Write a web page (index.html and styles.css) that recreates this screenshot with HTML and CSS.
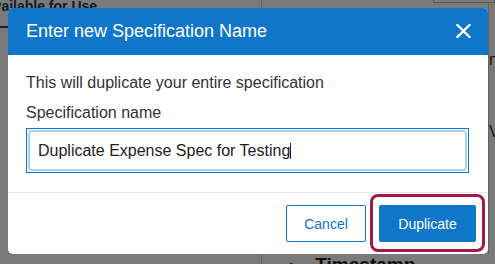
FILE: index.html
```html
<!DOCTYPE html>
<html lang="en">
<head>
  <meta charset="UTF-8" />
  <meta name="viewport" content="width=device-width, initial-scale=1.0"/>
  <title>Specifications | Duplicate</title>
  <link rel="stylesheet" href="styles.css">
</head>
<body>

  <!-- page behind the dialog -->
  <div class="page">
    <div class="page-left">
      <h2 class="section-title">Available for Use</h2>
      <div class="tab-line"></div>
    </div>
    <div class="page-right">
      <div class="top-box"></div>
      <div class="side-col">
        <span class="side-letter">n</span>
        <span class="side-letter second">V</span>
      </div>
      <div class="row-title"><span class="chev">›</span>Timestamp</div>
    </div>
  </div>

  <div class="overlay">
    <div class="modal">
      <div class="modal-header">
        <h1>Enter new Specification Name</h1>
        <button class="close-btn" aria-label="Close">
          <svg width="15" height="14" viewBox="0 0 15 14">
            <path d="M1.5 1 L13.5 13 M13.5 1 L1.5 13" stroke="#fff" stroke-width="2.3" stroke-linecap="square"/>
          </svg>
        </button>
      </div>

      <div class="modal-body">
        <p>This will duplicate your entire specification</p>
        <label>Specification name</label>
        <div class="field">
          <div class="field-input">Duplicate Expense Spec for Testing<span class="caret"></span></div>
        </div>
      </div>

      <div class="modal-footer">
        <button class="btn btn-outline">Cancel</button>
        <button class="btn btn-primary highlighted">Duplicate</button>
      </div>
    </div>
  </div>

</body>
</html>
```

FILE: styles.css
```css
:root {
  --blue: #1076ca;
  --lightblue: #a9d1f2;
  --crimson: #a8174a;
}

body {
  font-family: 'Liberation Sans', Arial, sans-serif;
  margin: 0;
  width: 495px;
  height: 264px;
  overflow: hidden;
  background: #fff;
}

.page {
  display: grid;
  grid-template-columns: 262px 1fr;
  height: 264px;
}

.page-left {
  border-right: 1px solid #d4d4d4;
  overflow: hidden;
}

.section-title {
  margin: -2px 0 0 -16px;
  font-size: 14px;
  color: #1d3a5c;
  white-space: nowrap;
}

.tab-line {
  margin-top: 12px;
  width: 40px;
  height: 2px;
  background: #1d4f86;
}

.page-right {
  display: flex;
  flex-direction: column;
  align-items: flex-end;
}

.top-box {
  width: 60px;
  height: 2px;
  border: 1px solid #bbb;
  border-top: none;
}

.side-col {
  width: 6px;
  flex: 1;
  border-left: 1px solid #ccc;
  padding-top: 48px;
  display: flex;
  flex-direction: column;
  font-size: 16px;
  color: #333;
  overflow: hidden;
}

.side-letter.second {
  margin-top: 54px;
}

.row-title {
  align-self: flex-start;
  padding-left: 27px;
  font-size: 19px;
  font-weight: bold;
  color: #222;
  height: 10px;
  white-space: nowrap;
}

.chev {
  font-weight: normal;
  margin-right: 20px;
}

.overlay {
  position: fixed;
  inset: 0;
  background: rgba(0, 0, 0, 0.52);
}

.modal {
  margin: 8px 0 0 8px;
  width: 480px;
  background: #fff;
  border-radius: 5px;
}

.modal-header {
  background: var(--blue);
  height: 47px;
  padding: 0 17px 0 18px;
  display: flex;
  justify-content: space-between;
  align-items: center;
  border-radius: 5px 5px 0 0;
}

.modal-header h1 {
  margin: 0;
  font-size: 18px;
  font-weight: normal;
  color: #fff;
}

.close-btn {
  background: none;
  border: none;
  padding: 0;
  display: flex;
  margin-top: -2px;
}

.modal-body {
  padding: 19px 19px 19px 18px;
  color: #333;
  font-size: 16px;
  line-height: 18px;
}

.modal-body p {
  margin: 0 0 12px;
}

.modal-body label {
  display: block;
  margin-bottom: 6px;
}

.field {
  border: 1px solid var(--blue);
  padding: 1px;
}

.field-input {
  border: 2px solid var(--lightblue);
  border-radius: 4px;
  height: 37px;
  line-height: 37px;
  padding-left: 8px;
  color: #222;
}

.caret {
  display: inline-block;
  width: 1px;
  height: 16px;
  background: #222;
  vertical-align: -3px;
}

.modal-footer {
  border-top: 1px solid #e6e6e6;
  padding: 12px 12px 12px 0;
  display: flex;
  justify-content: flex-end;
  gap: 13px;
}

.btn {
  font-family: inherit;
  font-size: 14px;
  height: 37px;
  border-radius: 2px;
  cursor: pointer;
}

.btn-outline {
  width: 80px;
  background: #fff;
  border: 1px solid var(--blue);
  color: var(--blue);
}

.btn-primary {
  width: 97px;
  background: var(--blue);
  border: 1px solid var(--blue);
  color: #fff;
}

.highlighted {
  position: relative;
}

.highlighted::after {
  content: "";
  position: absolute;
  top: -12px;
  bottom: -11px;
  left: -10px;
  right: -10px;
  border: 3px solid var(--crimson);
  border-radius: 8px;
}
```
